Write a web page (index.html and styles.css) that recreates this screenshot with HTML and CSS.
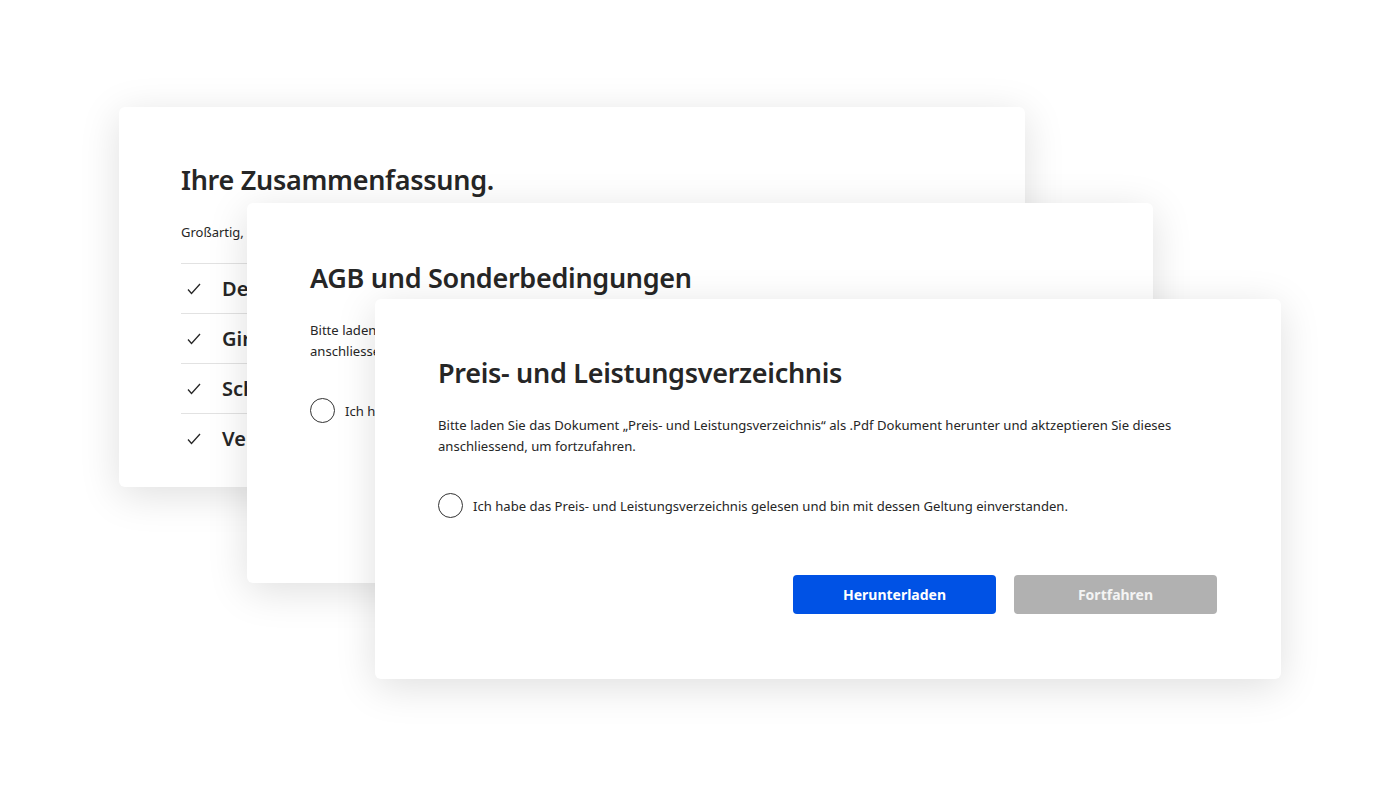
FILE: index.html
```html
<!DOCTYPE html>
<html lang="de">
  <head>
    <meta charset="UTF-8" />
    <meta name="viewport" content="width=device-width, initial-scale=1.0" />
    <title>Zusammenfassung</title>
    <link rel="stylesheet" href="styles.css">
  </head>
  <body>
    <div class="stage">
      <!-- hinterste Karte -->
      <section class="card card-summary">
        <h2>Ihre Zusammenfassung.</h2>
        <p class="intro">Großartig, Sie haben alle Schritte erfolgreich abgeschlossen.</p>
        <ul class="checklist">
          <li>
            <svg class="check" viewBox="0 0 14 12"><polyline points="1,6.5 4.5,10.5 13,1" /></svg>
            Depotkonto
          </li>
          <li>
            <svg class="check" viewBox="0 0 14 12"><polyline points="1,6.5 4.5,10.5 13,1" /></svg>
            Girokonto
          </li>
          <li>
            <svg class="check" viewBox="0 0 14 12"><polyline points="1,6.5 4.5,10.5 13,1" /></svg>
            Schufa-Auskunft
          </li>
          <li>
            <svg class="check" viewBox="0 0 14 12"><polyline points="1,6.5 4.5,10.5 13,1" /></svg>
            Verifizierung
          </li>
        </ul>
      </section>

      <section class="card card-agb">
        <h2>AGB und Sonderbedingungen</h2>
        <p class="text">
          Bitte laden Sie das Dokument „AGB und Sonderbedingungen“ als .Pdf Dokument herunter und aktzeptieren Sie dieses
          anschliessend, um fortzufahren.
        </p>
        <label class="radio">
          <span class="circle"></span>
          Ich habe die AGB und Sonderbedingungen gelesen und bin mit deren Geltung einverstanden.
        </label>
      </section>

      <!-- vorderste Karte -->
      <section class="card card-preis">
        <h2>Preis- und Leistungsverzeichnis</h2>
        <p class="text">
          Bitte laden Sie das Dokument „Preis- und Leistungsverzeichnis“ als .Pdf Dokument herunter und aktzeptieren Sie dieses
          anschliessend, um fortzufahren.
        </p>
        <label class="radio">
          <span class="circle"></span>
          Ich habe das Preis- und Leistungsverzeichnis gelesen und bin mit dessen Geltung einverstanden.
        </label>
        <div class="actions">
          <button class="primary">Herunterladen</button>
          <button class="disabled">Fortfahren</button>
        </div>
      </section>
    </div>
  </body>
</html>
```

FILE: styles.css
```css
body {
  font-family: "Noto Sans", "Open Sans", sans-serif;
  background-color: #fff;
  color: #262626;
  margin: 0;
  padding: 0;
}

.stage {
  position: relative;
  width: 1400px;
  height: 786px;
  overflow: hidden;
}

.card {
  position: absolute;
  width: 906px;
  height: 380px;
  box-sizing: border-box;
  padding: 56px 64px 0 62px;
  background-color: #fff;
  border-radius: 6px;
  box-shadow: 0 8px 40px rgba(0, 0, 0, 0.13);
}

.card-summary {
  left: 119px;
  top: 107px;
  padding-top: 55px;
}

.card-agb {
  left: 247px;
  top: 203px;
  padding-top: 57px;
  padding-left: 63px;
}

.card-preis {
  left: 375px;
  top: 299px;
  padding-left: 63px;
}

h2 {
  font-size: 27px;
  font-weight: 600;
  line-height: 36px;
  margin: 0;
  letter-spacing: -0.3px;
}

.intro {
  font-size: 13px;
  line-height: 20px;
  margin: 24px 0 21px;
}

.checklist {
  list-style: none;
  margin: 0;
  padding: 0;
}

.checklist li {
  display: flex;
  align-items: center;
  height: 49px;
  border-top: 1px solid #e2e2e2;
  font-size: 20px;
  font-weight: 600;
}

.check {
  width: 14px;
  height: 12px;
  margin: 0 21px 0 6px;
  fill: none;
  stroke: #262626;
  stroke-width: 1.3;
}

.text {
  font-size: 13.1px;
  line-height: 21px;
  margin: 24px 0 0;
  max-width: 760px;
}

.radio {
  display: flex;
  align-items: center;
  gap: 10px;
  margin-top: 36px;
  font-size: 13.1px;
}

.circle {
  width: 23px;
  height: 23px;
  border: 1.3px solid #333;
  border-radius: 50%;
}

.actions {
  display: flex;
  justify-content: flex-end;
  gap: 18px;
  margin-top: 57px;
}

button {
  width: 203px;
  height: 39px;
  border: none;
  border-radius: 4px;
  font-family: inherit;
  font-size: 14px;
  font-weight: 700;
  color: #fff;
}

button.primary {
  background-color: #0052e5;
}

button.disabled {
  background-color: #b1b1b1;
  color: #f4f4f4;
}
```
